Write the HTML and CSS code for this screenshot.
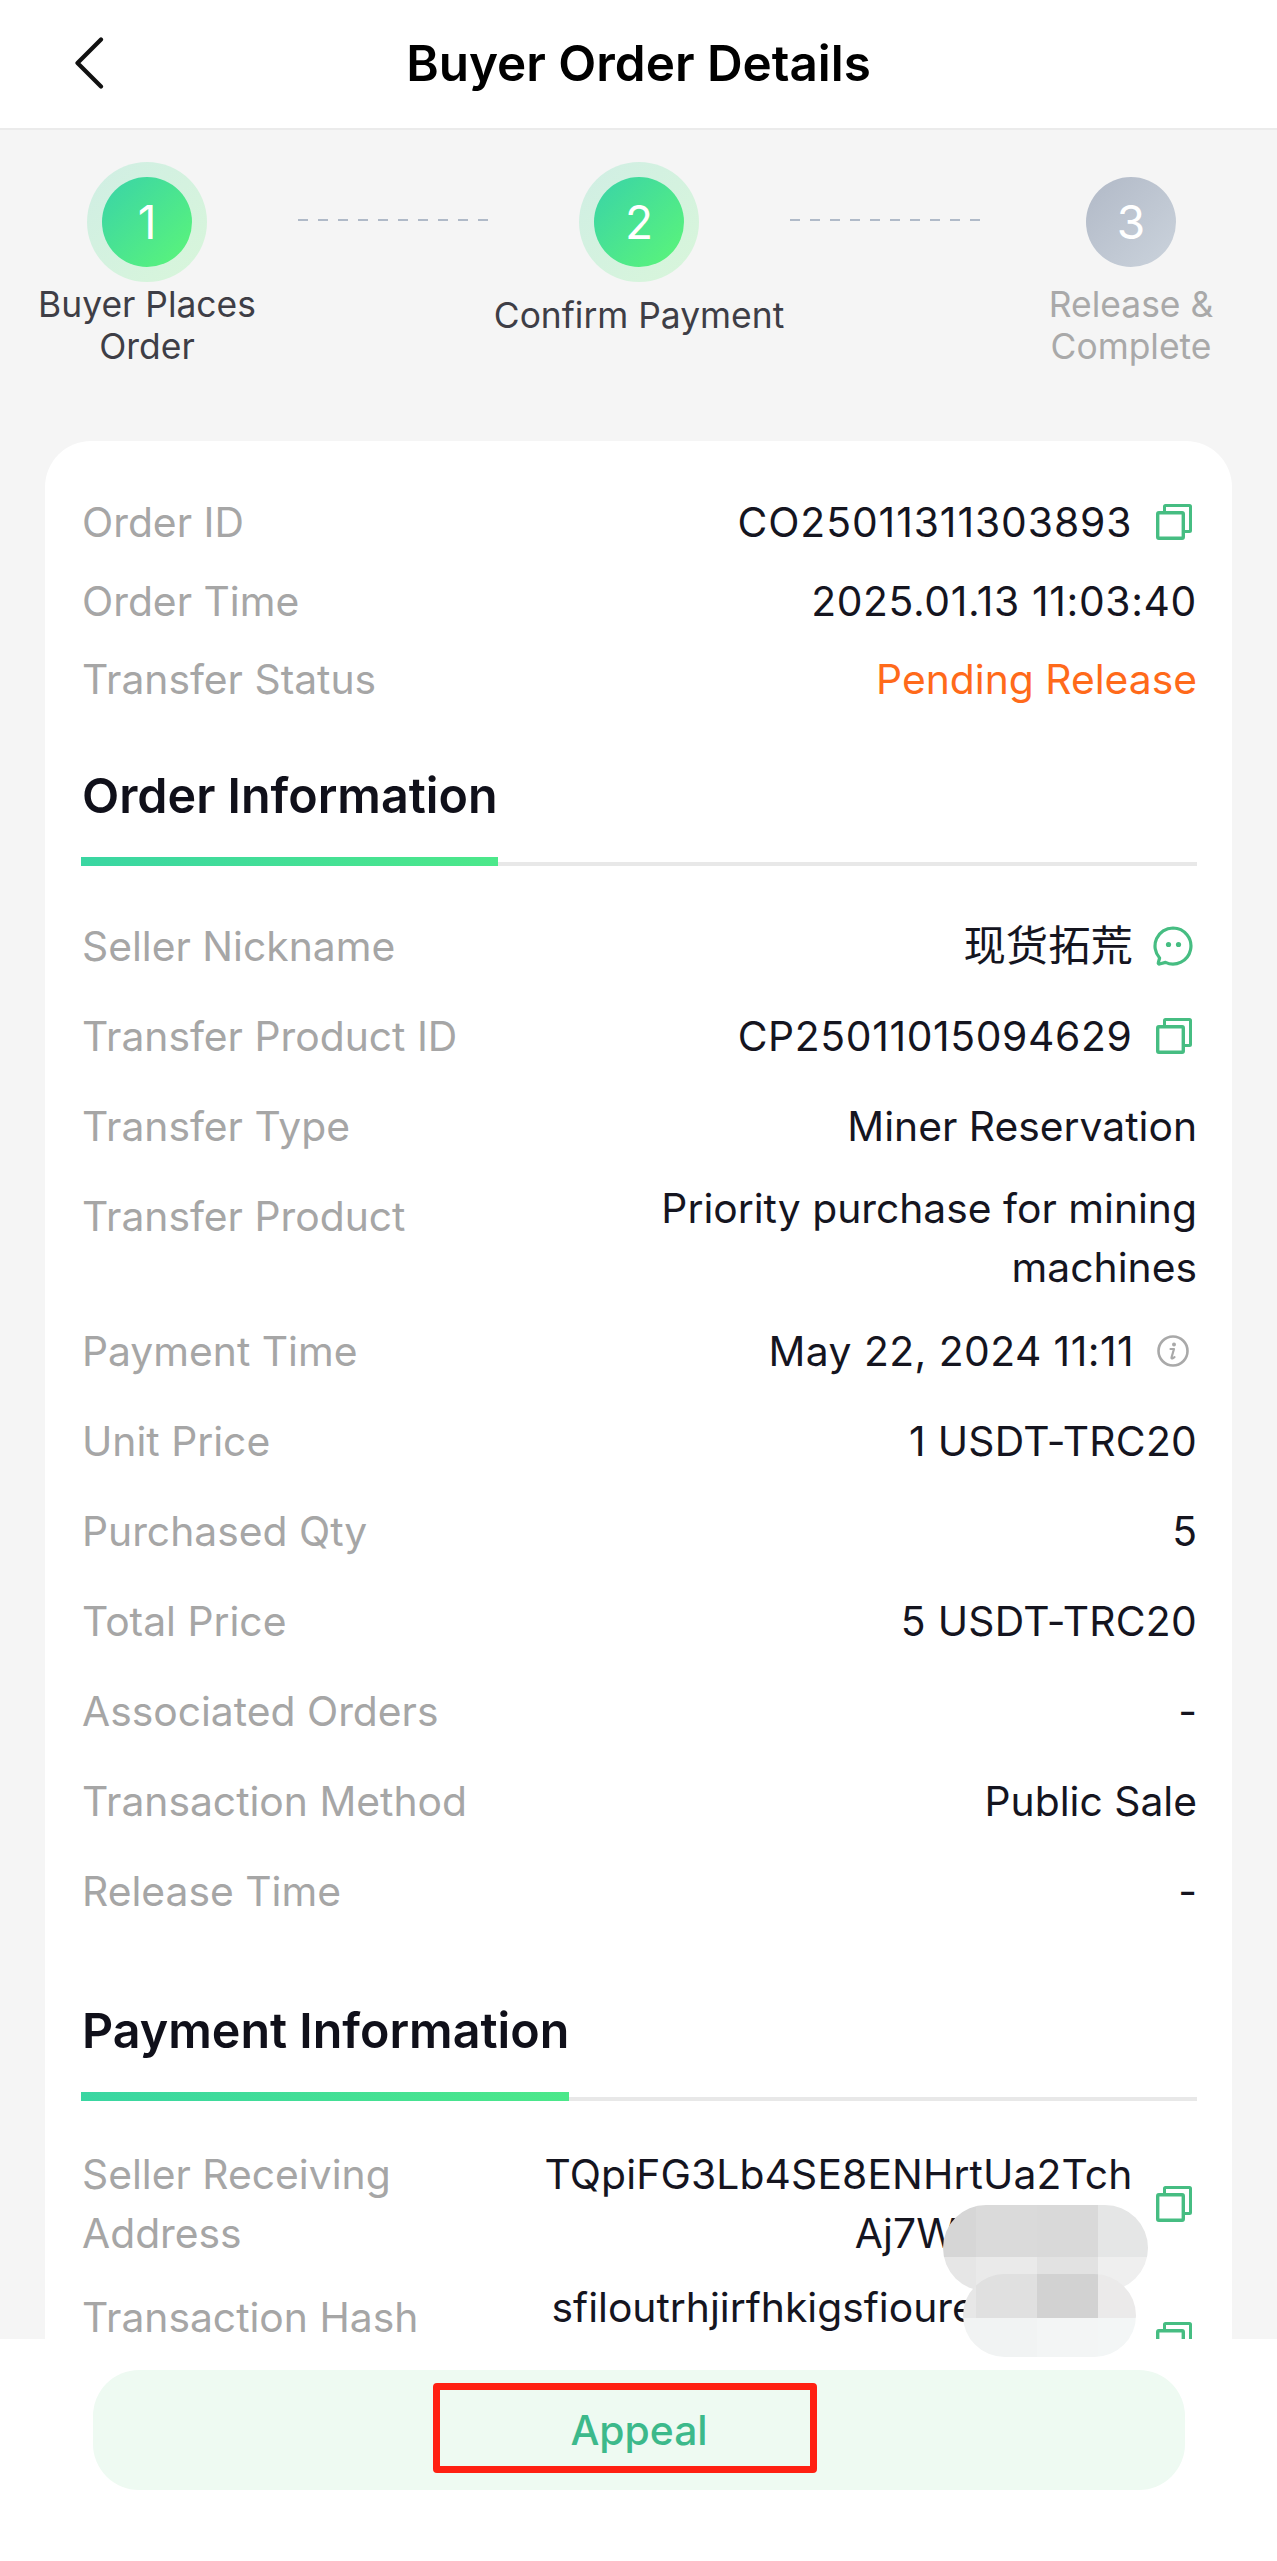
FILE: index.html
```html
<!DOCTYPE html>
<html lang="en">
<head>
<meta charset="utf-8">
<title>Buyer Order Details</title>
<link rel="stylesheet" href="styles.css">
</head>
<body>
<svg class="defs" width="0" height="0" aria-hidden="true">
  <symbol id="copy" viewBox="0 0 36 36">
    <path d="M8.5 7V2.5a1 1 0 0 1 1-1h24a1 1 0 0 1 1 1v24a1 1 0 0 1-1 1H29" fill="none" stroke="currentColor" stroke-width="3"/>
    <rect x="1.7" y="8.7" width="25.6" height="25.6" rx="1.2" fill="none" stroke="currentColor" stroke-width="3.4"/>
  </symbol>
</svg>
<div class="page">
  <header class="topbar">
    <svg class="back" viewBox="0 0 30 52" width="30" height="52"><path d="M27 2.5 3.500 26 27 49.500" fill="none" stroke="#111" stroke-width="4.200" stroke-linecap="round" stroke-linejoin="round"/></svg>
    <h1 class="title">Buyer Order Details</h1>
  </header>

  <section class="steps">
    <div class="step">
      <div class="halo"><div class="dot">1</div></div>
      <div class="step-label">Buyer Places Order</div>
    </div>
    <div class="connector"><span></span></div>
    <div class="step">
      <div class="halo"><div class="dot">2</div></div>
      <div class="step-label step-label-single">Confirm Payment</div>
    </div>
    <div class="connector"><span></span></div>
    <div class="step step-off">
      <div class="halo"><div class="dot">3</div></div>
      <div class="step-label">Release &amp; Complete</div>
    </div>
  </section>

  <main class="card">
    <div class="summary">
      <div class="sum-row"><span class="label">Order ID</span><span class="value with-icon num-wide">CO25011311303893<svg class="copy"><use href="#copy"/></svg></span></div>
      <div class="sum-row"><span class="label">Order Time</span><span class="value num-mid">2025.01.13 11:03:40</span></div>
      <div class="sum-row"><span class="label">Transfer Status</span><span class="value status">Pending Release</span></div>
    </div>

    <h2 class="section-head"><span>Order Information</span></h2>
    <div class="rows">
      <div class="row"><span class="label">Seller Nickname</span><span class="value with-icon cjk">现货拓荒<svg class="chat" viewBox="0 0 40 40" width="40" height="40"><path d="M20 2a18 18 0 1 1-7.500 34.400L6.500 38a1 1 0 0 1-1.200-1.300l1.300-4.700A18 18 0 0 1 20 2Z" fill="none" stroke="#46bd82" stroke-width="3.200" stroke-linejoin="round"/><circle cx="15.500" cy="18.500" r="2.600" fill="#46bd82"/><circle cx="25.500" cy="18.500" r="2.600" fill="#46bd82"/></svg></span></div>
      <div class="row"><span class="label">Transfer Product ID</span><span class="value with-icon num-mid">CP25011015094629<svg class="copy"><use href="#copy"/></svg></span></div>
      <div class="row"><span class="label">Transfer Type</span><span class="value">Miner Reservation</span></div>
      <div class="row"><span class="label">Transfer Product</span><span class="value value-wrap">Priority purchase for mining machines</span></div>
      <div class="row"><span class="label">Payment Time</span><span class="value with-icon num">May 22, 2024 11:11<svg class="info" viewBox="0 0 32 32" width="32" height="32"><circle cx="16" cy="16" r="14.500" fill="none" stroke="#a9a9a9" stroke-width="2.600"/><circle cx="17" cy="9.500" r="2" fill="#a9a9a9"/><path d="M13.500 14h3.500l-2.500 8.500c-.2.800.4 1.200 1.200.8l1.800-1.200" fill="none" stroke="#a9a9a9" stroke-width="2.200" stroke-linecap="round" stroke-linejoin="round"/></svg></span></div>
      <div class="row"><span class="label">Unit Price</span><span class="value num-soft">1 USDT-TRC20</span></div>
      <div class="row"><span class="label">Purchased Qty</span><span class="value">5</span></div>
      <div class="row"><span class="label">Total Price</span><span class="value num-soft">5 USDT-TRC20</span></div>
      <div class="row"><span class="label">Associated Orders</span><span class="value">-</span></div>
      <div class="row"><span class="label">Transaction Method</span><span class="value">Public Sale</span></div>
      <div class="row"><span class="label">Release Time</span><span class="value">-</span></div>
    </div>

    <h2 class="section-head section-head-next"><span>Payment Information</span></h2>
    <div class="rows rows-payment">
      <div class="row row-address">
        <span class="label label-wrap">Seller Receiving Address</span>
        <span class="value with-icon"><span class="hash-text">TQpiFG3Lb4SE8ENHrtUa2Tch<br><span class="masked-a">Aj7W</span></span><svg class="copy"><use href="#copy"/></svg></span>
      </div>
      <div class="row row-hash">
        <span class="label">Transaction Hash</span>
        <span class="value with-icon"><span class="hash-text hash-single">sfiloutrhjirfhkigsfioure</span><svg class="copy copy-low"><use href="#copy"/></svg></span>
      </div>
    </div>
  </main>

  <footer class="bottombar">
    <button class="appeal">Appeal<span class="redbox"></span></button>
  </footer>

  <div class="mosaic mosaic-a">
    <i class="c1"></i><i class="c2"></i><i class="c3"></i><i class="c4"></i>
    <i class="c5"></i><i class="c6"></i><i class="c7"></i><i class="c8"></i>
  </div>
  <div class="mosaic mosaic-b">
    <i class="d1"></i><i class="d2"></i><i class="d3"></i><i class="d4"></i>
    <i class="d5"></i><i class="d6"></i><i class="d7"></i><i class="d8"></i>
  </div>
</div>
</body>
</html>
```
FILE: styles.css
```css
* { box-sizing: border-box; }
html, body { margin: 0; padding: 0; }
body { font-family: Inter, "Noto Sans CJK SC", sans-serif; background: #f5f5f5; color: #15151f; }
.defs { position: absolute; }
.page { position: relative; width: 1277px; height: 2561px; overflow: hidden; background: #f5f5f5; }

.topbar { height: 130px; background: #fff; border-bottom: 2px solid #ebebeb; display: flex; align-items: center; justify-content: center; position: relative; }
.back { position: absolute; left: 74px; top: 37px; }
.title { margin: 0 0 2px; font-size: 49.400px; font-weight: 600; line-height: 58px; color: #000; }

.steps { display: flex; padding: 32px 34px 0 35px; height: 311px; }
.step { width: 224px; flex: none; display: flex; flex-direction: column; align-items: center; }
.halo { width: 120px; height: 120px; border-radius: 50%; background: linear-gradient(135deg, #d0eee4, #d8f6da); display: flex; align-items: center; justify-content: center; }
.dot { width: 90px; height: 90px; border-radius: 50%; background: linear-gradient(135deg, #39d3a8, #5cf678); color: #fff; font-size: 46px; line-height: 90px; text-align: center; }
.step-label { margin-top: 2px; font-size: 35.400px; line-height: 41.500px; text-align: center; color: #3e3e46; }
.step-label-single { margin-top: 13px; white-space: nowrap; }
.step-off .halo { background: none; }
.step-off .dot { background: linear-gradient(135deg, #b1b9c7, #cbd3dc); }
.step-off .step-label { color: #a9a9a9; }
.connector { flex: 1; display: flex; justify-content: center; padding-top: 57px; }
.connector span { width: 190px; height: 2px; background: repeating-linear-gradient(90deg, #b0bac8 0 10px, transparent 10px 20px); }

.card { margin-left: 45px; width: 1187px; height: 2100px; background: #fff; border-radius: 46px 46px 0 0; padding: 42px 35px 0 37px; }
.label { color: #a6a6a6; font-size: 40.800px; white-space: nowrap; flex: none; }
.value { font-size: 40.800px; color: #15151f; text-align: right; }
.num-wide { letter-spacing: .95px; }
.num-mid { letter-spacing: .65px; }
.num { letter-spacing: .45px; }
.num-soft { letter-spacing: .25px; }
.sum-row { display: flex; justify-content: space-between; height: 78.500px; line-height: 78.500px; }
.status { color: #ff6a1a; }
.with-icon { display: flex; align-items: center; }
.copy { width: 36px; height: 36px; margin-left: 23px; margin-right: 5.500px; color: #46bd82; flex: none; }
.chat { margin-left: 20px; margin-right: 4px; flex: none; }
.info { margin-left: 23px; margin-right: 8px; flex: none; }
.cjk { font-size: 42.400px; }

.section-head { margin: 48px 0 0 -1px; border-bottom: 4px solid #e8e8e8; height: 99px; font-size: 48.400px; font-weight: 600; line-height: 58px; color: #10101a; position: relative; }
.section-head span { display: inline-block; height: 99px; padding-left: 1px; position: relative; }
.section-head span::after { content: ""; position: absolute; left: 0; right: 0; bottom: 0; height: 9px; background: linear-gradient(90deg, #3ad6a2, #4ce88a); }
.section-head-next { margin-top: 78px; }

.rows { padding-top: 47px; display: flex; flex-direction: column; gap: 24px; }
.row { display: flex; justify-content: space-between; align-items: flex-start; min-height: 66px; line-height: 66px; }
.value-wrap { width: 540px; line-height: 59px; margin: -4px 0 -3px; }
.rows-payment { padding-top: 44px; }
.row-address { line-height: 59px; margin-bottom: -3px; }
.row-address .hash-text { letter-spacing: .13px; }
.label-wrap { white-space: normal; width: 320px; }
.hash-text { display: block; line-height: 59px; }
.masked-a { display: inline-block; padding-right: 176px; }
.row-hash { line-height: 66px; }
.row-hash .with-icon { align-items: flex-start; }
.hash-single { margin-top: -6px; width: 581px; text-align: left; white-space: nowrap; overflow: hidden; }
.copy-low { margin-top: 38px; }

.bottombar { position: absolute; left: 0; right: 0; bottom: 0; height: 222px; background: #fff; padding: 31px 92px 0 93px; }
.appeal { position: relative; display: block; width: 1092px; height: 120px; border: 0; border-radius: 46px; background: #eefaf2; color: #3cb98b; font: 500 40.800px/120px Inter, sans-serif; padding: 0; }
.redbox { position: absolute; left: 340px; top: 13px; width: 384px; height: 90px; border: 7px solid #ff2012; border-radius: 4px; }

.mosaic { position: absolute; display: grid; border-radius: 42px; overflow: hidden; }
.mosaic-a { left: 943px; top: 2205px; width: 205px; height: 86px; grid-template-columns: 33px 61px 61px 50px; grid-template-rows: 52px 34px; border-radius: 43px; }
.mosaic-b { left: 963px; top: 2274px; width: 173px; height: 83px; grid-template-columns: 13px 61px 61px 38px; grid-template-rows: 44px 39px; }
.c1 { background: #d6d6d6; } .c2 { background: #dadada; } .c3 { background: #d9d9d9; } .c4 { background: #e5e6e6; }
.c5 { background: #e6e6e6; } .c6 { background: #eaeaea; } .c7 { background: #e2e2e2; } .c8 { background: #efefef; }
.d1 { background: #e7e7e7; } .d2 { background: #e0e0e0; } .d3 { background: #d2d2d2; } .d4 { background: #ebeaea; }
.d5 { background: #f1f3f3; } .d6 { background: #f1f3f3; } .d7 { background: #f3f5f5; } .d8 { background: #f3f6f6; }
```
